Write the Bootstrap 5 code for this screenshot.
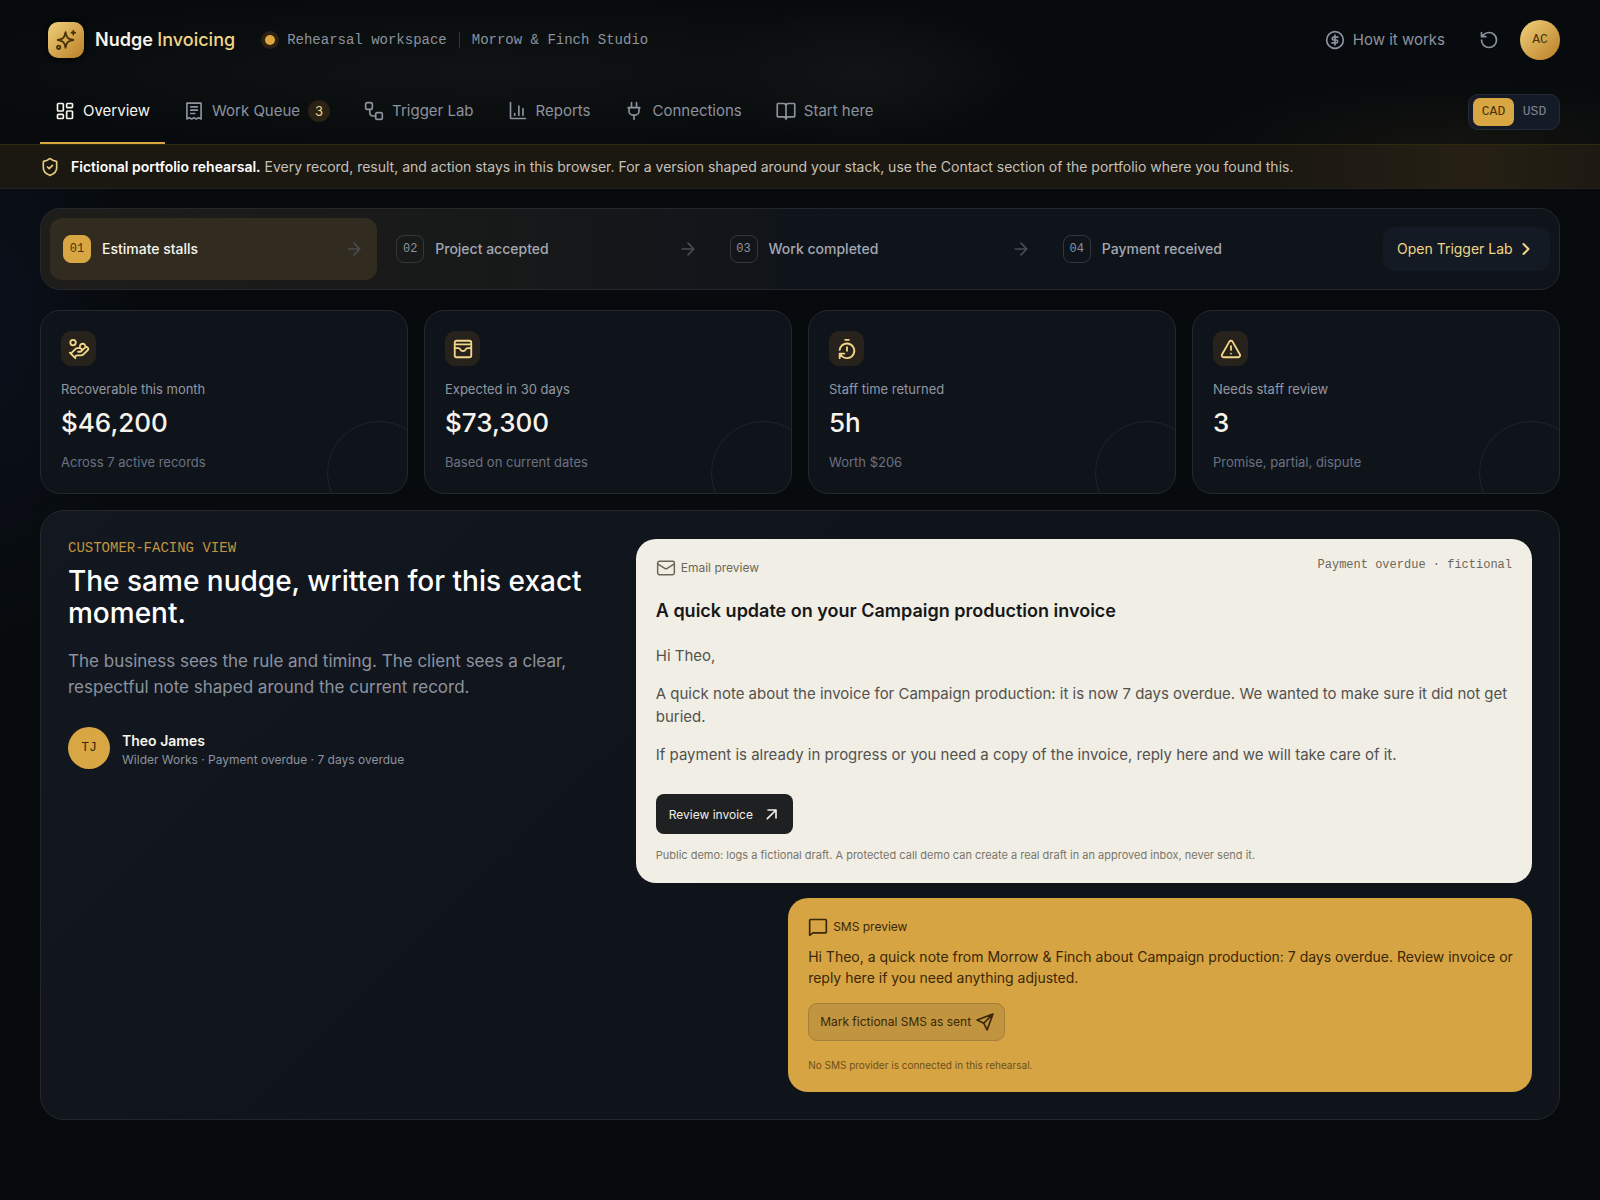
<!DOCTYPE html>
<html lang="en" data-bs-theme="dark">
<head>
<meta charset="utf-8">
<meta name="viewport" content="width=device-width, initial-scale=1">
<title>Nudge Invoicing</title>
<link href="https://cdn.jsdelivr.net/npm/bootstrap@5.3.0/dist/css/bootstrap.min.css" rel="stylesheet">
<style>
  :root { --ink:#f7f4ec; --soft:#8d929f; --dim:#6b7181; --gold:#d8a743; --pale:#f0d685; --panel:#0f141b; --edge:#24282c; }
  body { min-height:100vh; color:var(--ink); font:400 14px/20px Inter,"Liberation Sans",sans-serif; background:#070a0d; background-image:radial-gradient(ellipse 140px 340px at 0 320px,#0b101b,transparent),linear-gradient(#060a0c,#070b0d 60%,#07090c); }
  a { color:inherit; text-decoration:none; }
  button { font-family:inherit; }
  svg { fill:none; stroke:currentColor; stroke-width:2; stroke-linecap:round; stroke-linejoin:round; flex:none; }
  .thin { stroke-width:1.8; }
  .mono { font-family:"Liberation Mono",monospace; }
  .gutter { padding-left:40px; padding-right:40px; }
  .site-head { background:radial-gradient(ellipse 560px 75px at 480px 72px,#0f1313,transparent),radial-gradient(ellipse 160px 70px at 860px 75px,#111515,transparent),radial-gradient(ellipse 260px 70px at 1460px 150px,#15140f,transparent),#070b0d; }
  .topline { height:80px; }
  .logo { width:36px; height:36px; border-radius:10px; color:#4a3206; background:linear-gradient(135deg,#f0d07c,#b97f25); box-shadow:0 0 6px #000; }
  .brand { font-size:18px; font-weight:600; margin-left:11px; }
  .brand span { color:var(--pale); font-weight:500; }
  .workspace { margin-left:30px; color:var(--soft); gap:12px; }
  .dot { width:10px; height:10px; border-radius:50%; background:#dfa640; box-shadow:0 0 0 4px #2a2113; }
  .bar { width:1px; height:16px; background:#30343b; }
  .tool { color:var(--soft); font-size:15px; background:none; border:0; padding:0; gap:8px; }
  .reset { margin:0 21px 0 34px; }
  .avatar { width:40px; height:40px; border-radius:50%; color:#4d350c; font-size:13px; background:linear-gradient(135deg,#f0d07c,#b97f25); border:0; padding:0; }
  .tabs { gap:4px; height:64px; }
  .tabs a { height:64px; padding:0 15px; gap:8px; color:var(--soft); font-size:15px; border-bottom:2px solid transparent; }
  .tabs a.active { color:var(--ink); border-color:var(--gold); }
  .count { width:22px; height:22px; border-radius:50%; background:#2a2215; color:var(--pale); font-size:13px; }
  .money { height:36px; padding:4px; border:1px solid #242a35; border-radius:10px; background:#151b26; }
  .money button { width:41px; height:28px; border:0; padding:0; border-radius:7px; background:none; color:#7f8593; font-size:13px; }
  .money button.on { background:var(--gold); color:#4a3206; }
  .notice { height:45px; background:linear-gradient(90deg,#1b1812 80%,#262014 92%,#1e1a12); border-top:1px solid #30280f; border-bottom:1px solid #222320; color:#c5c1b8; gap:11px; }
  .notice svg { color:#e7cd7f; }
  .notice strong { color:#fff; font-weight:600; }
  .flow { margin-top:19px; padding:8px 9px; min-height:82px; gap:6px; border:1px solid var(--edge); border-radius:20px; background:linear-gradient(90deg,#1e1d1a,#171919 30%,var(--panel) 53%); }
  .step { flex:1 1 0; min-height:62px; padding:0 13px; border-radius:12px; color:#a3a7b2; font-weight:500; gap:11px; }
  .step svg { margin-left:auto; color:#484c54; }
  .step .num { width:28px; height:28px; border-radius:8px; border:1px solid #33373d; font-size:12px; color:#8d929f; }
  .step.now { background:#322c20; color:var(--ink); }
  .step.now .num { background:var(--gold); border-color:var(--gold); color:#4a3206; }
  .open { height:44px; width:167px; padding:0 14px; border:0; border-radius:12px; background:#141a24; color:var(--pale); }
  .stats { display:grid; grid-template-columns:repeat(4,1fr); gap:16px; margin-top:20px; }
  .stat { position:relative; overflow:hidden; padding:20px 20px 21px; border:1px solid var(--edge); border-radius:20px; background:var(--panel); }
  .stat::after { content:""; position:absolute; right:-24px; bottom:-32px; width:104px; height:104px; border:1px solid #1f242b; border-radius:50%; }
  .tile { width:35px; height:35px; border-radius:10px; background:#27231c; color:var(--pale); }
  .stat .name { margin-top:13px; font-size:13px; color:#9297a3; }
  .stat .figure { font-size:26px; line-height:36px; font-weight:500; margin-top:6px; }
  .stat .hint { margin-top:11px; font-size:13px; color:var(--dim); }
  .story { display:grid; grid-template-columns:3fr 5fr; gap:30px; margin-top:16px; margin-bottom:40px; padding:28px 27px 27px; border:1px solid var(--edge); border-radius:24px; background:linear-gradient(135deg,#131820,#0f141b 50%); }
  .eyebrow { color:#c0953c; line-height:18px; }
  .story h1 { font-size:28px; line-height:32px; font-weight:500; margin:8px 0 0; }
  .pitch { font-size:17px; line-height:26px; color:var(--soft); margin:19px 0 0; }
  .person { margin-top:27px; gap:12px; }
  .face { width:42px; height:42px; border-radius:50%; background:var(--gold); color:#3a290c; font-size:13px; }
  .who { font-size:12px; line-height:18px; color:var(--soft); }
  .previews { gap:15px; }
  .email { border-radius:20px; padding:19px 20px 20px; background:#f1eee6; color:#54524d; font-size:15px; line-height:23px; }
  .email h2 { color:#171717; font-size:18px; font-weight:600; line-height:26px; margin:20px 0 20px; }
  .email p { margin:0 0 15px; }
  .kind { gap:5px; font-size:12px; line-height:20px; color:#6c6759; }
  .tag { line-height:14px; }
  .review { margin-top:28px; height:40px; width:137px; border:0; border-radius:8px; background:#1e2022; color:#f1eee6; font-size:12px; padding:0 13px; }
  .fine { font-size:11px; line-height:16px; color:#7b7566; margin-top:13px; }
  .sms { width:83%; border-radius:20px; padding:19px 12px 19px 20px; background:#d6a443; color:#3a2707; }
  .sms .kind { color:#3a2707; }
  .sms p { margin:9px 0 15px; line-height:21px; }
  .sent { height:38px; padding:0 9px 0 11px; border:1px solid #a58038; border-radius:9px; background:#c1953f; color:#3a2707; font-size:12px; gap:4px; }
  .sms .fine { color:#6d5019; margin-top:16px; font-size:10px; }
</style>
<script src="https://cdn.jsdelivr.net/npm/bootstrap@5.3.0/dist/js/bootstrap.bundle.min.js"></script>
</head>
<body>
<header class="site-head">
  <div class="topline gutter d-flex align-items-center ps-5">
    <a href="#" class="d-flex align-items-center">
      <span class="logo d-flex align-items-center justify-content-center"><svg width="22" height="22" viewBox="0 0 24 24"><path d="M11.500 3.500c1 6 2.500 7.500 8.500 8.500-6 1-7.500 2.500-8.500 8.500-1-6-2.500-7.500-8.500-8.500 6-1 7.500-2.500 8.500-8.500zM20 2v4M18 4h4"/><circle cx="4" cy="20" r="1.800"/></svg></span>
      <span class="brand">Nudge <span>Invoicing</span></span>
    </a>
    <div class="workspace mono d-flex align-items-center"><i class="dot"></i><span>Rehearsal workspace</span><i class="bar"></i><span>Morrow &amp; Finch Studio</span></div>
    <div class="ms-auto d-flex align-items-center">
      <button class="tool d-flex align-items-center"><svg width="20" height="20" viewBox="0 0 24 24"><circle cx="12" cy="12" r="10"/><path d="M15.500 8.500h-5a1.750 1.750 0 0 0 0 3.500h3a1.750 1.750 0 0 1 0 3.500h-5M12 6v12"/></svg>How it works</button>
      <button class="tool reset" aria-label="Reset"><svg width="20" height="20" viewBox="0 0 24 24"><path d="M3 12a9 9 0 1 0 9-9 9.750 9.750 0 0 0-6.740 2.740L3 8M3 3v5h5"/></svg></button>
      <button class="avatar mono">AC</button>
    </div>
  </div>
  <div class="gutter d-flex align-items-center justify-content-between">
    <nav class="tabs d-flex">
      <a href="#" class="active d-flex align-items-center"><svg width="20" height="20" viewBox="0 0 24 24"><rect x="3" y="3" width="7" height="9" rx="1"/><rect x="14" y="3" width="7" height="5" rx="1"/><rect x="14" y="12" width="7" height="9" rx="1"/><rect x="3" y="16" width="7" height="5" rx="1"/></svg>Overview</a>
      <a href="#" class="d-flex align-items-center"><svg width="20" height="20" viewBox="0 0 24 24"><path d="M3.500 2.500h17v19l-2.800-1.500-2.900 1.500L12 20l-2.800 1.500L6.300 20l-2.800 1.500zM8 7h8M8 11h8M8 15h5"/></svg>Work Queue <span class="count d-flex align-items-center justify-content-center">3</span></a>
      <a href="#" class="d-flex align-items-center"><svg width="20" height="20" viewBox="0 0 24 24"><rect x="2" y="2" width="8" height="8" rx="2"/><rect x="14" y="14" width="8" height="8" rx="2"/><path d="M7 10v4.500A3.500 3.500 0 0 0 10.500 18H14"/></svg>Trigger Lab</a>
      <a href="#" class="d-flex align-items-center"><svg width="20" height="20" viewBox="0 0 24 24"><path d="M3 2v18a1 1 0 0 0 1 1h17M8 17v-2M13 17V6M18 17V9"/></svg>Reports</a>
      <a href="#" class="d-flex align-items-center"><svg width="20" height="20" viewBox="0 0 24 24"><path d="M12 22v-5M9 8V2M15 8V2M5 8h14M18 8v4a5 5 0 0 1-5 5h-2a5 5 0 0 1-5-5V8z"/></svg>Connections</a>
      <a href="#" class="d-flex align-items-center"><svg width="20" height="20" viewBox="0 0 24 24"><path d="M12 6a3 3 0 0 0-3-3H2.500a1 1 0 0 0-1 1v14a1 1 0 0 0 1 1H9a3 3 0 0 1 3 3 3 3 0 0 1 3-3h6.500a1 1 0 0 0 1-1V4a1 1 0 0 0-1-1H15a3 3 0 0 0-3 3zv15"/></svg>Start here</a>
    </nav>
    <div class="money mono d-flex align-items-center"><button class="on">CAD</button><button>USD</button></div>
  </div>
</header>
<div class="notice gutter d-flex align-items-center"><svg width="20" height="20" viewBox="0 0 24 24"><path d="M20 13c0 5-3.500 7.500-7.700 9a1 1 0 0 1-.6 0C7.500 20.500 4 18 4 13V6a1 1 0 0 1 1-1c2 0 4.500-1.200 6.200-2.700a1.200 1.200 0 0 1 1.600 0C14.500 3.800 17 5 19 5a1 1 0 0 1 1 1zM9 12l2 2 4-4"/></svg><span><strong>Fictional portfolio rehearsal.</strong> Every record, result, and action stays in this browser. For a version shaped around your stack, use the Contact section of the portfolio where you found this.</span></div>
<main class="gutter">
  <section class="flow d-flex align-items-center">
    <div class="step now d-flex align-items-center"><span class="num mono d-flex align-items-center justify-content-center">01</span>Estimate stalls<svg width="20" height="20" viewBox="0 0 24 24"><path d="M5 12h14M12 5l7 7-7 7"/></svg></div>
    <div class="step d-flex align-items-center"><span class="num mono d-flex align-items-center justify-content-center">02</span>Project accepted<svg width="20" height="20" viewBox="0 0 24 24"><path d="M5 12h14M12 5l7 7-7 7"/></svg></div>
    <div class="step d-flex align-items-center"><span class="num mono d-flex align-items-center justify-content-center">03</span>Work completed<svg width="20" height="20" viewBox="0 0 24 24"><path d="M5 12h14M12 5l7 7-7 7"/></svg></div>
    <div class="step d-flex align-items-center"><span class="num mono d-flex align-items-center justify-content-center">04</span>Payment received</div>
    <button class="open d-flex align-items-center justify-content-between">Open Trigger Lab<svg width="20" height="20" viewBox="0 0 24 24"><path stroke-width="2.500" d="M9 6l6 6-6 6"/></svg></button>
  </section>
  <section class="stats">
    <article class="stat"><div class="tile d-flex align-items-center justify-content-center"><svg width="22" height="22" viewBox="0 0 24 24"><circle cx="5.500" cy="5" r="3"/><path d="M13 9.800a3 3 0 1 1 5.700.7M11 15h2a2 2 0 1 0 0-4h-3c-.6 0-1.100.2-1.400.6L3 17M7 21l1.600-1.400c.3-.4.800-.6 1.400-.6h4c1.100 0 2.100-.4 2.800-1.200l4.600-4.400a2 2 0 0 0-2.750-2.910l-4.200 3.900M2 16l6 6"/></svg></div><div class="name">Recoverable this month</div><div class="figure">$46,200</div><div class="hint">Across 7 active records</div></article>
    <article class="stat"><div class="tile d-flex align-items-center justify-content-center"><svg width="22" height="22" viewBox="0 0 24 24"><rect x="3" y="3" width="18" height="18" rx="2"/><path d="M3 7h18M3 11h4c1 0 1.600.5 2 1.300a3.300 3.300 0 0 0 6 0c.4-.8 1-1.300 2-1.300h4"/></svg></div><div class="name">Expected in 30 days</div><div class="figure">$73,300</div><div class="hint">Based on current dates</div></article>
    <article class="stat"><div class="tile d-flex align-items-center justify-content-center"><svg width="22" height="22" viewBox="0 0 24 24"><path d="M10 2h4M12 14v-4M4 13a8 8 0 0 1 8-7 8 8 0 1 1-5.300 14L4 17.600M9 17H4v5"/></svg></div><div class="name">Staff time returned</div><div class="figure">5h</div><div class="hint">Worth $206</div></article>
    <article class="stat"><div class="tile d-flex align-items-center justify-content-center"><svg width="22" height="22" viewBox="0 0 24 24"><path d="M21.700 18l-8-14a2 2 0 0 0-3.500 0l-8 14A2 2 0 0 0 4 21h16a2 2 0 0 0 1.700-3M12 9v4M12 17h.01"/></svg></div><div class="name">Needs staff review</div><div class="figure">3</div><div class="hint">Promise, partial, dispute</div></article>
  </section>
  <section class="story">
    <div>
      <div class="eyebrow mono">CUSTOMER-FACING VIEW</div>
      <h1>The same nudge, written for this exact moment.</h1>
      <p class="pitch">The business sees the rule and timing. The client sees a clear, respectful note shaped around the current record.</p>
      <div class="person d-flex align-items-end"><span class="face mono d-flex align-items-center justify-content-center">TJ</span><div><div class="fw-semibold">Theo James</div><div class="who">Wilder Works · Payment overdue · 7 days overdue</div></div></div>
    </div>
    <div class="previews d-flex flex-column align-items-end">
      <article class="email w-100">
        <div class="kind d-flex align-items-start"><svg class="thin" width="20" height="20" viewBox="0 0 24 24"><rect x="2" y="4" width="20" height="16" rx="2"/><path d="M22 7l-9 5.700a2 2 0 0 1-2 0L2 7"/></svg><span>Email preview</span><span class="tag mono ms-auto">Payment overdue · fictional</span></div>
        <h2>A quick update on your Campaign production invoice</h2>
        <p>Hi Theo,</p>
        <p>A quick note about the invoice for Campaign production: it is now 7 days overdue. We wanted to make sure it did not get buried.</p>
        <p>If payment is already in progress or you need a copy of the invoice, reply here and we will take care of it.</p>
        <button class="review d-flex align-items-center justify-content-between">Review invoice<svg width="16" height="16" viewBox="0 0 24 24"><path stroke-width="2.500" d="M6 6h12v12M18 6 5 19"/></svg></button>
        <div class="fine">Public demo: logs a fictional draft. A protected call demo can create a real draft in an approved inbox, never send it.</div>
      </article>
      <article class="sms">
        <div class="kind d-flex align-items-center"><svg width="20" height="20" viewBox="0 0 24 24"><path d="M21 3H3a1 1 0 0 0-1 1v18l4-3h15a1 1 0 0 0 1-1V4a1 1 0 0 0-1-1z"/></svg><span>SMS preview</span></div>
        <p>Hi Theo, a quick note from Morrow &amp; Finch about Campaign production: 7 days overdue. Review invoice or reply here if you need anything adjusted.</p>
        <button class="sent d-flex align-items-center">Mark fictional SMS as sent<svg width="20" height="20" viewBox="0 0 24 24"><path d="M21.500 2.500 14.500 21.500l-4-8-8-4zM21.500 2.500l-11 11"/></svg></button>
        <div class="fine">No SMS provider is connected in this rehearsal.</div>
      </article>
    </div>
  </section>
</main>
</body>
</html>
